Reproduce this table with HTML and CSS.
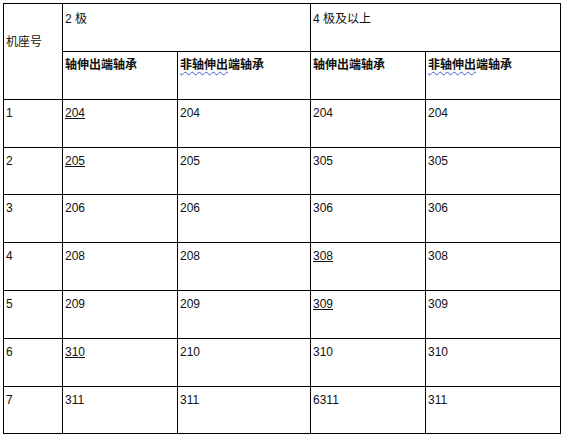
FILE: index.html
```html
<!DOCTYPE html>
<html lang="zh">
<head>
<meta charset="utf-8">
<title>机座号轴承表</title>
<link rel="stylesheet" href="styles.css">
</head>
<body>
<table class="spec">
  <colgroup>
    <col class="c1"><col class="c2"><col class="c3"><col class="c4"><col class="c5">
  </colgroup>
  <tr class="r-top">
    <td rowspan="2" class="seat">机座号</td>
    <td colspan="2" class="grp">2 极</td>
    <td colspan="2" class="grp">4 极及以上</td>
  </tr>
  <tr class="r-sub">
    <td class="hd">轴伸出端轴承</td>
    <td class="hd"><span class="spell">非轴伸出</span>端轴承</td>
    <td class="hd">轴伸出端轴承</td>
    <td class="hd"><span class="spell">非轴伸出</span>端轴承</td>
  </tr>
  <tr class="r48"><td>1</td><td><u>204</u></td><td>204</td><td>204</td><td>204</td></tr>
  <tr class="r47"><td>2</td><td><u>205</u></td><td>205</td><td>305</td><td>305</td></tr>
  <tr class="r48"><td>3</td><td>206</td><td>206</td><td>306</td><td>306</td></tr>
  <tr class="r48"><td>4</td><td>208</td><td>208</td><td><u>308</u></td><td>308</td></tr>
  <tr class="r48"><td>5</td><td>209</td><td>209</td><td><u>309</u></td><td>309</td></tr>
  <tr class="r48"><td>6</td><td><u>310</u></td><td>210</td><td>310</td><td>310</td></tr>
  <tr class="r47"><td>7</td><td>311</td><td>311</td><td>6311</td><td>311</td></tr>
</table>
</body>
</html>
```

FILE: styles.css
```css
html, body {
  margin: 0;
  padding: 0;
  background: #ffffff;
}

body {
  padding: 3px 0 0 3px;
  font-family: "Liberation Sans", Arial, "Noto Sans CJK SC", sans-serif;
  font-size: 12px;
  color: #111111;
}

.spec {
  border-collapse: collapse;
  table-layout: fixed;
  width: 557px;
}

.c1 { width: 59px; }
.c2 { width: 115px; }
.c3 { width: 133px; }
.c4 { width: 115px; }
.c5 { width: 135px; }

.spec td {
  border: 1px solid #000000;
  vertical-align: top;
  padding: 6px 2px 0 2px;
  line-height: 14px;
  white-space: nowrap;
}

.r-top { height: 48px; }
.r-sub { height: 48px; }
.r48 { height: 48px; }
.r47 { height: 47px; }

.spec td.seat {
  padding-top: 31px;
}

.spec td.grp {
  padding-top: 8px;
}

.spec td.hd {
  font-weight: bold;
  padding-top: 6px;
}

.spell {
  text-decoration: underline wavy #3a5fcd;
  text-decoration-thickness: 1px;
  text-underline-offset: 2px;
}

u {
  text-decoration: underline;
  text-underline-offset: 1px;
}
```
